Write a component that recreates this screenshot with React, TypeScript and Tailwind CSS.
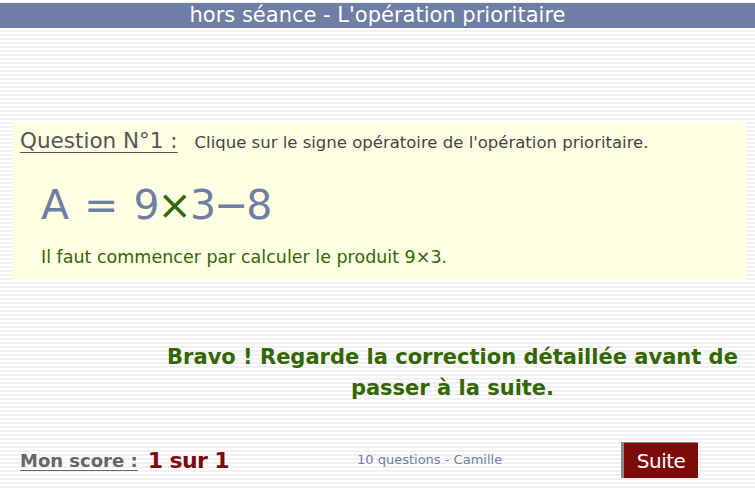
export default function App() {
  return (
    <div
      className="relative h-[490px] w-[755px] overflow-hidden bg-[repeating-linear-gradient(to_bottom,#ffffff_0px,#ffffff_2px,#f1f1f3_2px,#f1f1f3_4px)] font-['DejaVu_Sans',sans-serif]"
    >
      {/* Title bar */}
      <div className="mt-[3px] flex h-[25px] items-center justify-center bg-[#6f7ea5] text-[21px] leading-none text-white">
        hors séance - L'opération prioritaire
      </div>

      {/* Question card */}
      <div className="ml-[12px] mr-[9px] mt-[94px] h-[158px] bg-[#ffffe4] px-[8px] pt-[3px]">
        <div className="flex items-baseline">
          <span className="text-[21.5px] text-[#555555] underline decoration-1 underline-offset-[4px]">
            Question N°1 :
          </span>
          <span className="ml-[17px] text-[16.5px] text-[#444444]">
            Clique sur le signe opératoire de l'opération prioritaire.
          </span>
        </div>
        <div className="ml-[21px] mt-[28px] text-[41px] leading-none tracking-[-2px] text-[#6f7ea5] [word-spacing:6px]">
          A = 9<span className="text-[#336600]">×</span>3−8
        </div>
        <div className="ml-[21px] mt-[18px] text-[17.5px] text-[#336600]">
          Il faut commencer par calculer le produit 9×3.
        </div>
      </div>

      {/* Feedback */}
      <div className="ml-[150px] mt-[62px] text-center text-[21px] font-bold leading-[31px] text-[#336600]">
        Bravo ! Regarde la correction détaillée avant de
        <br />
        passer à la suite.
      </div>

      {/* Footer */}
      <div className="mt-[38px] flex items-center">
        <span className="ml-[20px] text-[18px] font-bold text-[#666666] underline decoration-1 underline-offset-[3px]">
          Mon score :
        </span>
        <span className="ml-[10px] text-[22px] font-bold tracking-[-0.6px] text-[#7d0a0a]">
          1 sur 1
        </span>
        <span className="ml-[128px] text-[13px] text-[#6f7ea5]">
          10 questions - Camille
        </span>
        <button className="ml-[119px] flex h-[36px] w-[77px] items-center justify-center border-l-[3px] border-t border-[#8a8a8a] bg-[#7d0a0a] text-[20px] tracking-[-0.5px] text-white">
          Suite
        </button>
      </div>
    </div>
  );
}
